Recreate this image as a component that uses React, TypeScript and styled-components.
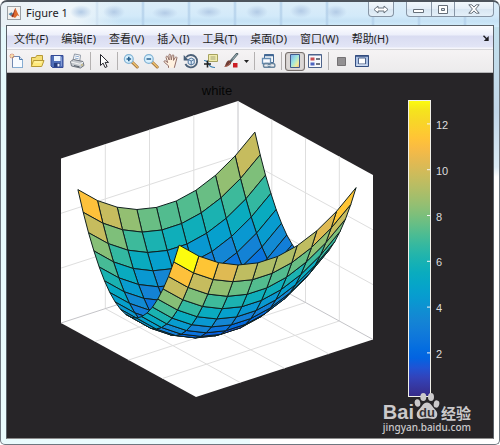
import React from "react";
import styled, { createGlobalStyle, css } from "styled-components";

const GlobalStyle = createGlobalStyle`
  * { box-sizing: border-box; }
  body { margin: 0; background: #fff; }
  button { font: inherit; color: inherit; padding: 0; margin: 0; border: 0; background: none; }
`;

/* ---------- window chrome ---------- */

const Window = styled.main`
  display: flex;
  flex-direction: column;
  padding: 0 5px 5px 5px;
  border: 1px solid #6f7780;
  border-top: 2px solid #4d545c;
  border-radius: 7px 7px 5px 5px;
  background:
    radial-gradient(ellipse 11px 7px at 80px 10px, #b3cbe6 0%, transparent 100%),
    radial-gradient(ellipse 11px 7px at 113px 10px, #b3cbe6 0%, transparent 100%),
    radial-gradient(ellipse 13px 6px at 164px 11px, #b3cbe6 0%, transparent 100%),
    radial-gradient(ellipse 13px 6px at 208px 10px, #b3cbe6 0%, transparent 100%),
    radial-gradient(ellipse 11px 7px at 256px 10px, #b3cbe6 0%, transparent 100%),
    radial-gradient(ellipse 11px 7px at 300px 9px, #b3cbe6 0%, transparent 100%),
    radial-gradient(ellipse 11px 7px at 335px 10px, #b3cbe6 0%, transparent 100%),
    linear-gradient(90deg, #e9f1f6 0, #eff6fa 70px, transparent 120px) 0 0 / 100% 25px no-repeat,
    repeating-linear-gradient(90deg, transparent 0, transparent 42px, #b3d0ea 44px, transparent 46px) 6px 0 / 100% 25px no-repeat,
    linear-gradient(180deg, #dcedf8 0, #d3eafa 14px, #c6e2f5 19px, #d3edfb 25px) 0 0 / 100% 25px no-repeat,
    linear-gradient(#e4f8fb, #eafbfd) 0 0 / 50% 100% no-repeat,
    linear-gradient(180deg, #c3e4ee 0, #c2d6e8 110px, #dcebf5 165px, #fff 175px);
  font-family: "Noto Sans", "Noto Sans CJK SC", sans-serif;
  overflow: hidden;
`;

const TitleBar = styled.header`
  display: flex;
  align-items: flex-start;
  height: 23px;
`;

const TitleLabel = styled.h1`
  flex: 1;
  display: flex;
  align-items: center;
  gap: 5px;
  height: 21px;
  margin: 0;
  padding-left: 1px;
  font-size: 11px;
  font-weight: 400;
  color: #1c2024;
`;

const CaptionGroup = styled.div`
  display: flex;
  height: 15px;
  margin-right: 12px;
  border: 1px solid #8795a5;
  border-top: 0;
  border-radius: 0 0 4px 4px;
  background: linear-gradient(#f2f8fc, #e4eef7 50%, #d8e6f2 51%, #e4f0f9);

  & + & { margin-right: 0; }
`;

const CaptionButton = styled.button<{ $width: number }>`
  display: flex;
  align-items: center;
  justify-content: center;
  width: ${(p) => p.$width}px;

  & + & { border-left: 1px solid #8795a5; }
`;

const Client = styled.div`
  border: 1px solid #5b6269;
  border-bottom-color: #8c8c8c;
  background: #f1eff0;
`;

const MenuBar = styled.nav`
  display: flex;
  align-items: center;
  gap: 13px;
  height: 23px;
  padding: 0 4px 0 7px;
  background: linear-gradient(#fdfdff 0, #eceffa 9px, #d9dcf1 10px, #e2e5f6 21px, #f6f6fb 22px);
  font-size: 11px;
  color: #1d1d22;
`;

const MenuItem = styled.button`
  white-space: nowrap;
`;

const DockButton = styled.button`
  display: flex;
  margin-left: auto;
`;

const ToolBar = styled.div`
  display: flex;
  align-items: center;
  height: 24px;
  border-top: 1px solid #d5d5d8;
  border-bottom: 1px solid #b5b5b7;
  background: linear-gradient(#f5f3f4, #ecebec);
`;

const ToolButton = styled.button<{ $pressed?: boolean; $narrow?: boolean }>`
  display: flex;
  align-items: center;
  justify-content: center;
  width: ${(p) => (p.$narrow ? 10 : 20)}px;
  height: 19px;
  ${(p) =>
    p.$pressed &&
    css`
      border: 1px solid #77716e;
      border-radius: 3px;
      background: #dcd8d6;
      box-shadow: inset 0 0 1px #77716e;
    `}
`;

const Divider = styled.span`
  width: 1px;
  height: 18px;
  margin: 0 3px;
  background: #b4b1b1;
`;

/* ---------- figure area ---------- */

const FigureArea = styled.section`
  position: relative;
  background: #272528;
`;

const Plot = styled.svg`
  display: block;
  width: 100%;
  height: auto;
  font-family: "Liberation Sans", Arial, sans-serif;
`;

const Watermark = styled.a`
  position: absolute;
  right: 22px;
  bottom: 4px;
  display: flex;
  flex-direction: column;
  color: #cbc9cb;
  text-decoration: none;
`;

const WatermarkBrand = styled.span`
  display: flex;
  align-items: flex-end;
  height: 29px;
  font: 700 20px/17px "Liberation Sans", Arial, sans-serif;
`;

const WatermarkCjk = styled.span`
  font: 700 15px/16px "Noto Sans CJK SC", sans-serif;
`;

const WatermarkUrl = styled.span`
  font: 500 10px/13px "Noto Sans", sans-serif;
`;

/* ---------- icons ---------- */

const Icon = ({ children, size = 16 }: { children: React.ReactNode; size?: number }) => (
  <svg width={size} height={size} viewBox="0 0 16 16" fill="none" aria-hidden="true">
    {children}
  </svg>
);

const MatlabIcon = () => (
  <svg width="14" height="14" viewBox="0 0 14 14" aria-hidden="true">
    <rect x=".5" y=".5" width="13" height="13" fill="#f3f1ee" stroke="#9aa0a5" />
    <path d="M1.5 8 4.5 6.2 6 7.5 4 10Z" fill="#4c86a8" />
    <path d="M4 10 6 7.5 8 2.5 9 2.5 8 9.5 6 11.5Z" fill="#8c3020" />
    <path d="M8.3 2.3C9.8 4 10.5 8 12.6 10.5L10.5 9.3 8 12 6.3 10.8Z" fill="#dc6b2f" />
  </svg>
);

const NewIcon = () => (
  <Icon>
    <path d="M3.5 3.5h7l3 3v8h-10z" fill="#f8fbff" stroke="#7188b0" />
    <path d="M10.5 3.5v3h3" fill="#d4e3f5" stroke="#527cac" />
    <path d="M4 14.5h9.500M13.500 7v7.500" stroke="#86add2" />
    <path d="M3 .5v5M.5 3h5M1.2 1.2l3.6 3.6M4.8 1.2 1.2 4.8" stroke="#dc8e61" />
    <circle cx="3" cy="3" r="1.1" fill="#fff1b2" />
  </Icon>
);
const OpenIcon = () => (
  <Icon>
    <path d="M2.5 13V4.5h4l1.200-2h5.800V7" fill="#f5de75" stroke="#b69936" />
    <path d="M2.300 13.500 4.500 7.500H15l-2.300 6z" fill="#ffea7c" stroke="#b69936" />
    <path d="M5.500 9h7" stroke="#fff8bd" />
  </Icon>
);
const SaveIcon = () => (
  <Icon>
    <path d="M2 2.5h12v12H3.500L2 13z" fill="#506fb8" stroke="#344a96" />
    <path d="M5 3h6.500v5H5z" fill="#ecf5ff" />
    <path d="M5 10h6v4H5z" fill="#263d7f" />
    <path d="M8.500 10.800h2v2.700h-2z" fill="#edf2ff" />
    <path d="M12.500 4v9" stroke="#829bd5" />
  </Icon>
);
const PrintIcon = () => (
  <Icon>
    <path d="m4 7 1.500-6 6 1.200-.8 6z" fill="#fff" stroke="#9098a5" />
    <path d="m6.200 3 3.800.8M5.800 5l3.800.8" stroke="#8eabd0" />
    <path d="m1.500 8.500 3-2 9.500 2 1 4-3.500 2.500-9-2z" fill="#c4c8cd" stroke="#727881" />
    <path d="m2 9 9 2.300 3.500-2.500" stroke="#f5f5f5" />
    <path d="m5 12.600 5.500 1.200" stroke="#555e69" />
    <circle cx="13" cy="12" r=".8" fill="#c7ad48" />
  </Icon>
);
const PointerIcon = () => (
  <Icon>
    <path d="M4.500 1.500v11l2.600-2.400 2 4.400 2-.9-2-4.200h3.400z" fill="#fff" stroke="#24242b" />
  </Icon>
);
const ZoomIcon = ({ plus }: { plus?: boolean }) => (
  <Icon>
    <path d="m9 9 5.200 5" stroke="#a27239" strokeWidth="3" strokeLinecap="round" />
    <path d="m9.600 9.200 4.800 4.700" stroke="#edc16e" strokeWidth="1.4" strokeLinecap="round" />
    <circle cx="5.8" cy="6" r="4.4" fill="#d9f0fd" stroke="#83b4d5" strokeWidth="1.3" />
    <path d="M3.500 6h4.600" stroke="#28618e" strokeWidth="1.6" />
    {plus && <path d="M5.800 3.700v4.600" stroke="#28618e" strokeWidth="1.6" />}
  </Icon>
);
const HandIcon = () => (
  <Icon>
    <path
      d="M5.500 14.800v-2L1.300 9.200C.6 8 1.700 7.300 2.700 8l2 1.600L3 4.300c0-1.400 1.300-1.600 1.800-.4L6.200 7l-.3-4.800c.1-1.300 1.600-1.300 1.800 0L8.300 7l.8-4.400c.3-1.200 1.800-1 1.700.3L10.500 7.400l1.800-3c.7-1 1.800-.4 1.600.6L12.300 11l-1 3.800"
      fill="#fff1df"
      stroke="#906d66"
    />
  </Icon>
);
const RotateIcon = () => (
  <Icon>
    <path d="M3.100 4.300A6.200 6.200 0 1 1 2.400 11" stroke="#4c6179" strokeWidth="1.8" />
    <path d="M.7 2v5.400H6z" fill="#465d76" />
    <path d="m5.200 6.500 3-1.500 3 1.500v4L8.100 12l-2.900-1.500z" fill="#e2eefa" stroke="#4d739b" />
    <path d="m5.200 6.500 3 1.500 3-1.500M8.200 8v4" stroke="#4d739b" />
  </Icon>
);
const DataCursorIcon = () => (
  <Icon>
    <path d="M5.500 1.500h9v7h-9z" fill="#f1ecae" stroke="#a6a25e" />
    <path d="M7.500 4h5M7.500 6h5" stroke="#a4a57a" />
    <path d="M1 7.500c2 0 4 2 5 4s3 3 6 3" stroke="#3980b1" strokeWidth="1.2" />
    <path d="M4.500 7.500v7M1 11h7" stroke="#202020" strokeWidth="1.6" />
  </Icon>
);
const BrushIcon = () => (
  <Icon>
    <path d="m14 1-6.500 7.500" stroke="#54656c" strokeWidth="2.6" strokeLinecap="round" />
    <path d="m13.700 1.500-4 4.600" stroke="#a9bec5" strokeLinecap="round" />
    <path d="M7.700 8.300c1.300 2-.2 4.700-6.700 5.700 2-1.400 1.500-5.800 5-6.800z" fill="#713f37" />
    <path d="M2 13.400c3.300 0 4.300-1.800 4.600-3.200" stroke="#b66a58" />
    <path d="M10 10h4.500v4.500H10z" fill="#cb1f25" />
  </Icon>
);
const ArrowIcon = () => (
  <svg width="5" height="3" viewBox="0 0 5 3" aria-hidden="true">
    <path d="M0 0h5L2.500 3z" fill="#222" />
  </svg>
);
const LinkIcon = () => (
  <Icon>
    <path d="M4.500 1.500h9v8h-9z" fill="#f3f8fc" stroke="#436895" />
    <path d="M4.500 2.500h9" stroke="#436895" strokeWidth="1.6" />
    <path d="M2.500 5.500h8v5h-8z" fill="#f9fbff" stroke="#658cb2" strokeWidth="1.3" />
    <rect x="3.5" y="10.500" width="6.500" height="3.800" rx="1.900" stroke="#68859e" strokeWidth="1.4" />
    <rect x="8.400" y="10.500" width="6.500" height="3.800" rx="1.900" stroke="#68859e" strokeWidth="1.4" />
    <path d="M7 12.500h4.500" stroke="#c8d5df" />
  </Icon>
);
const ColorbarIcon = () => (
  <Icon>
    <defs>
      <linearGradient id="mini-bar" x2="1" y2="1">
        <stop stopColor="#7fa9f0" />
        <stop offset=".45" stopColor="#9ee7df" />
        <stop offset=".75" stopColor="#efec9b" />
        <stop offset="1" stopColor="#efaf83" />
      </linearGradient>
    </defs>
    <path d="M3.500 1.500h9v13h-9z" fill="url(#mini-bar)" stroke="#415b8b" />
  </Icon>
);
const LegendIcon = () => (
  <Icon>
    <path d="M1.500 1.500h13v13h-13z" fill="#f7f8fc" stroke="#4d638b" />
    <path d="M1.500 2h13" stroke="#4d638b" />
    <path d="M3.500 4.500h4v3h-4z" fill="#c84c52" />
    <path d="M3.500 9.500h4v3h-4z" fill="#4d64c1" />
    <path d="M9 6h4M9 11h4" stroke="#454b58" strokeWidth="1.5" />
  </Icon>
);
const HideToolsIcon = () => (
  <Icon>
    <path d="M3.500 4.500h8v8h-8z" fill="#929092" stroke="#747274" />
  </Icon>
);
const ShowToolsIcon = () => (
  <Icon>
    <path d="M1.500 2.500h13v11h-13z" fill="#adc2e5" stroke="#344e80" />
    <path d="M1.500 3h13" stroke="#344e80" strokeWidth="1.6" />
    <path d="M4.500 5h7v6h-7z" fill="#fff" stroke="#4d638b" />
    <path d="M2.500 12h11" stroke="#e6edf8" />
  </Icon>
);

const ResizeGlyph = () => (
  <svg width="16" height="9" viewBox="0 0 16 9" aria-hidden="true">
    <path d="M1 4.500 5 1v2h6V1l4 3.500L11 8V6H5v2z" fill="#fff" stroke="#68727d" />
  </svg>
);
const MinimizeGlyph = () => (
  <svg width="12" height="9" viewBox="0 0 12 9" aria-hidden="true">
    <path d="M.5 4.500h10v3H.5z" fill="#fff" stroke="#666f79" />
  </svg>
);
const MaximizeGlyph = () => (
  <svg width="11" height="9" viewBox="0 0 11 9" aria-hidden="true">
    <path d="M.5.5h9v8h-9z" fill="#fff" stroke="#666f79" />
    <path d="M3.500 3.500h3v2h-3z" fill="#d8e5f0" stroke="#666f79" />
  </svg>
);
const CloseGlyph = () => (
  <svg width="12" height="10" viewBox="0 0 12 10" aria-hidden="true">
    <path d="M.8.8h3L6 3.100 8.200.8h3L7.600 5l3.600 4.200h-3L6 6.900 3.800 9.200h-3L4.400 5z" fill="#fff" stroke="#666f79" />
  </svg>
);
const DockGlyph = () => (
  <svg width="6" height="6" viewBox="0 0 6 6" aria-hidden="true">
    <path d="m.5.8 4 4" stroke="#1c1c20" strokeWidth="1.4" />
    <path d="M5.700 1v5H.8z" fill="#1c1c20" />
  </svg>
);
const PawLogo = () => (
  <svg width="27" height="29" viewBox="0 0 27 29" aria-hidden="true">
    <g fill="#cbc9cb">
      <ellipse cx="9.300" cy="5" rx="3" ry="4" />
      <ellipse cx="17" cy="5" rx="3" ry="4" />
      <ellipse cx="3.500" cy="11" rx="2.800" ry="3.800" transform="rotate(-12 3.5 11)" />
      <ellipse cx="22.500" cy="12" rx="2.800" ry="3.700" transform="rotate(12 22.5 12)" />
      <path d="M13 10.500c4 0 5 4 8 7 4 3.500 2.500 9.500-2 9.500-2.500 0-3.500-.7-6-.7s-3.500.7-6 .7C2.500 27 1 21 5 17.500 8 15 9 10.500 13 10.500Z" />
    </g>
    <text x="13" y="25" textAnchor="middle" fontSize="13" fontWeight="700" fontFamily="Liberation Sans" fill="#343235">
      du
    </text>
  </svg>
);

/* ---------- surface plot: z = x² + y² ---------- */

const PARULA: number[][] = [
  [53, 42, 135], [54, 55, 160], [50, 67, 186], [32, 83, 212], [3, 99, 225], [4, 109, 224],
  [13, 117, 220], [18, 125, 216], [20, 133, 212], [16, 142, 210], [9, 152, 209], [6, 160, 205],
  [6, 167, 198], [10, 172, 190], [22, 177, 180], [37, 181, 170], [56, 185, 158], [77, 188, 146],
  [101, 190, 134], [124, 191, 123], [146, 191, 115], [165, 190, 107], [183, 189, 100],
  [200, 188, 93], [217, 186, 86], [233, 185, 78], [248, 187, 68], [255, 195, 55], [252, 206, 46],
  [247, 216, 38], [245, 228, 29], [252, 252, 14],
];

const NX = 10;
const NY = 20;
const Z_MIN = (2 / 9) ** 2 + (3 / 19) ** 2;
const Z_MAX = 13;

const gridX = (i: number) => -2 + (4 * i) / (NX - 1);
const gridY = (j: number) => -3 + (6 * j) / (NY - 1);
const height = (x: number, y: number) => x * x + y * y;

const project = (x: number, y: number, z: number) => {
  const px = 196 + 44.25 * (x + 2) - 16.875 * (y + 4);
  const py = 397 - 14.375 * (x + 2) - 9.25 * (y + 4) - 10.97 * z;
  return `${px.toFixed(1)},${py.toFixed(1)}`;
};

const colorAt = (z: number) => {
  const t = Math.max(0, Math.min(1, (z - Z_MIN) / (Z_MAX - Z_MIN))) * (PARULA.length - 1);
  const k = Math.min(PARULA.length - 2, Math.floor(t));
  const mix = PARULA[k].map((c, n) => Math.round(c + (PARULA[k + 1][n] - c) * (t - k)));
  return `rgb(${mix.join(",")})`;
};

const faces: { points: string; fill: string }[] = [];
for (let j = NY - 2; j >= 0; j--) {
  for (let i = NX - 2; i >= 0; i--) {
    const corners = [[i, j], [i + 1, j], [i + 1, j + 1], [i, j + 1]];
    faces.push({
      points: corners
        .map(([a, b]) => project(gridX(a), gridY(b), height(gridX(a), gridY(b))))
        .join(" "),
      fill: colorAt(height(gridX(i), gridY(j))),
    });
  }
}

const segment = (a: [number, number, number], b: [number, number, number]) =>
  `M${project(...a)}L${project(...b)}`;

const gridPath = [
  ...[-1, 0, 1].flatMap((x) => [segment([x, -4, 0], [x, 4, 0]), segment([x, 4, 0], [x, 4, 15])]),
  ...[-2, 0, 2].flatMap((y) => [segment([-2, y, 0], [2, y, 0]), segment([2, y, 0], [2, y, 15])]),
  ...[5, 10].flatMap((z) => [segment([-2, 4, z], [2, 4, z]), segment([2, 4, z], [2, -4, z])]),
].join("");

const edgePath = [
  segment([-2, 4, 0], [2, 4, 0]),
  segment([2, 4, 0], [2, -4, 0]),
  segment([2, 4, 0], [2, 4, 15]),
].join("");

const boxOutline = [
  project(-2, 4, 15), project(2, 4, 15), project(2, -4, 15),
  project(2, -4, 0), project(-2, -4, 0), project(-2, 4, 0),
].join(" ");

const BAR = { x: 408, y: 101, width: 23, height: 296 };
const barY = (v: number) => BAR.y + ((Z_MAX - v) / (Z_MAX - Z_MIN)) * BAR.height;

const SurfacePlot = () => (
  <Plot viewBox="7 73 486 365" role="img" aria-label="Surface plot with colour bar">
    <defs>
      <linearGradient id="parula" x1="0" y1="1" x2="0" y2="0">
        {PARULA.map((c, k) => (
          <stop key={k} offset={k / (PARULA.length - 1)} stopColor={`rgb(${c.join(",")})`} />
        ))}
      </linearGradient>
    </defs>
    <text x="217" y="95" textAnchor="middle" fontSize="13" fill="#050505">
      white
    </text>
    <polygon points={boxOutline} fill="#fff" />
    <path d={gridPath} stroke="#dedede" fill="none" />
    <path d={edgePath} stroke="#c4c4c8" fill="none" />
    <g stroke="#10201f" strokeWidth="1" strokeLinejoin="round">
      {faces.map((f, k) => (
        <polygon key={k} points={f.points} fill={f.fill} />
      ))}
    </g>
    <rect
      x={BAR.x + 0.5}
      y={BAR.y - 0.5}
      width={BAR.width - 1}
      height={BAR.height}
      fill="url(#parula)"
      stroke="#f0f0e8"
    />
    {[2, 4, 6, 8, 10, 12].map((v) => (
      <g key={v}>
        <path d={`M${BAR.x + BAR.width - 4} ${barY(v)}h4`} stroke="#f4f4f4" />
        <text x="436" y={barY(v) + 5} fontSize="11" fill="#dcdcdc">
          {v}
        </text>
      </g>
    ))}
  </Plot>
);

/* ---------- page ---------- */

const MENUS = ["文件(F)", "编辑(E)", "查看(V)", "插入(I)", "工具(T)", "桌面(D)", "窗口(W)", "帮助(H)"];

type Tool = { label: string; icon: React.ReactNode; pressed?: boolean; narrow?: boolean };

const TOOL_GROUPS: Tool[][] = [
  [
    { label: "New Figure", icon: <NewIcon /> },
    { label: "Open File", icon: <OpenIcon /> },
    { label: "Save Figure", icon: <SaveIcon /> },
    { label: "Print Figure", icon: <PrintIcon /> },
  ],
  [{ label: "Edit Plot", icon: <PointerIcon /> }],
  [
    { label: "Zoom In", icon: <ZoomIcon plus /> },
    { label: "Zoom Out", icon: <ZoomIcon /> },
    { label: "Pan", icon: <HandIcon /> },
    { label: "Rotate 3D", icon: <RotateIcon /> },
    { label: "Data Cursor", icon: <DataCursorIcon /> },
    { label: "Brush Data", icon: <BrushIcon /> },
    { label: "Brush Options", icon: <ArrowIcon />, narrow: true },
  ],
  [{ label: "Link Plot", icon: <LinkIcon /> }],
  [
    { label: "Insert Colorbar", icon: <ColorbarIcon />, pressed: true },
    { label: "Insert Legend", icon: <LegendIcon /> },
  ],
  [
    { label: "Hide Plot Tools", icon: <HideToolsIcon /> },
    { label: "Show Plot Tools", icon: <ShowToolsIcon /> },
  ],
];

export default function App() {
  return (
    <>
      <GlobalStyle />
      <Window>
        <TitleBar>
          <TitleLabel>
            <MatlabIcon />
            Figure 1
          </TitleLabel>
          <CaptionGroup>
            <CaptionButton $width={24} aria-label="Resize"><ResizeGlyph /></CaptionButton>
          </CaptionGroup>
          <CaptionGroup>
            <CaptionButton $width={24} aria-label="Minimize"><MinimizeGlyph /></CaptionButton>
            <CaptionButton $width={23} aria-label="Maximize"><MaximizeGlyph /></CaptionButton>
            <CaptionButton $width={39} aria-label="Close"><CloseGlyph /></CaptionButton>
          </CaptionGroup>
        </TitleBar>
        <Client>
          <MenuBar>
            {MENUS.map((m) => (
              <MenuItem key={m}>{m}</MenuItem>
            ))}
            <DockButton aria-label="Dock Figure"><DockGlyph /></DockButton>
          </MenuBar>
          <ToolBar role="toolbar">
            {TOOL_GROUPS.map((group, g) => (
              <React.Fragment key={g}>
                {g > 0 && <Divider />}
                {group.map((t) => (
                  <ToolButton
                    key={t.label}
                    aria-label={t.label}
                    aria-pressed={t.pressed}
                    $pressed={t.pressed}
                    $narrow={t.narrow}
                  >
                    {t.icon}
                  </ToolButton>
                ))}
              </React.Fragment>
            ))}
          </ToolBar>
          <FigureArea>
            <SurfacePlot />
            <Watermark href="https://jingyan.baidu.com">
              <WatermarkBrand>
                Bai
                <PawLogo />
                <WatermarkCjk>经验</WatermarkCjk>
              </WatermarkBrand>
              <WatermarkUrl>jingyan.baidu.com</WatermarkUrl>
            </Watermark>
          </FigureArea>
        </Client>
      </Window>
    </>
  );
}
